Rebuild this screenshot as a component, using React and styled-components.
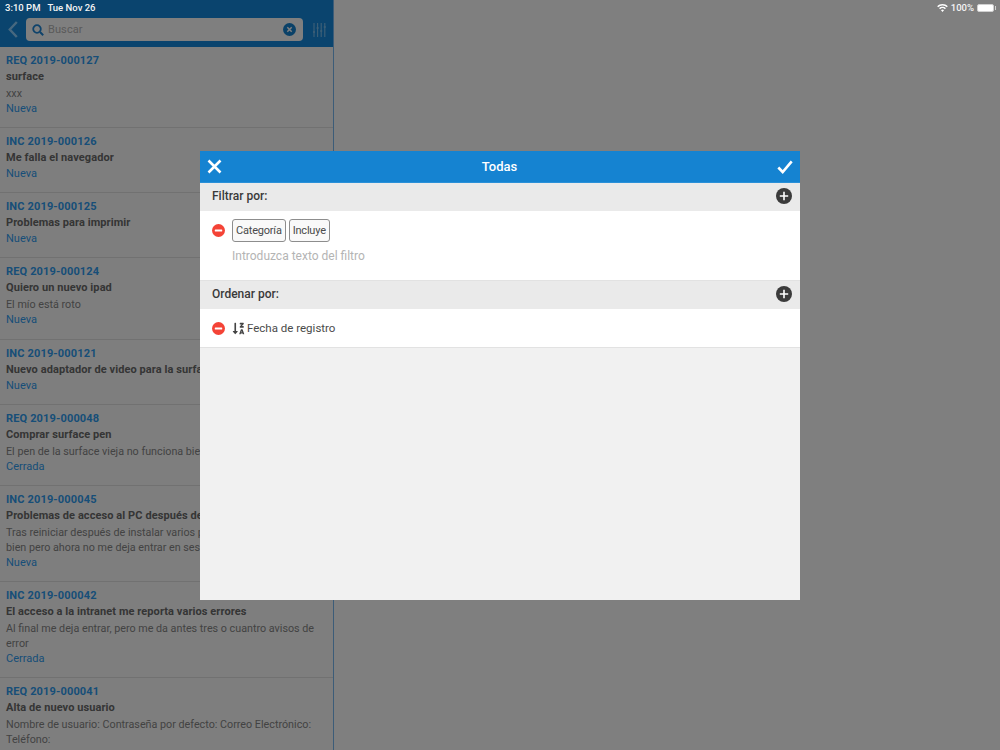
import React from 'react';
import styled, { createGlobalStyle } from 'styled-components';
import { FaSortAlphaDownAlt } from 'react-icons/fa';

const Global = createGlobalStyle`
  html, body { margin: 0; padding: 0; height: 100%; background: #fff; }
  body { font-family: Roboto, "Liberation Sans", sans-serif; overflow: hidden; }
  * { box-sizing: border-box; }
`;

const Page = styled.div`
  position: relative;
  width: 1000px;
  height: 750px;
  overflow: hidden;
  display: flex;
  background: #fff;
`;
const Sidebar = styled.aside`
  width: 334px;
  height: 750px;
  overflow: hidden;
  border-right: 1px solid #78b8f0;
  flex: none;
  display: flex;
  flex-direction: column;
`;
const NavBar = styled.header`
  height: 47px;
  flex: none;
  background: #1589dc;
  padding: 12px 0 0 8px;
  display: flex;
  align-items: center;
`;
const SearchBox = styled.div`
  width: 277px;
  height: 23px;
  margin: 0 10px 0 8px;
  background: #fff;
  border-radius: 4px;
  display: flex;
  align-items: center;
  padding: 0 7px 0 6px;
  gap: 4px;
`;
const SearchText = styled.span`
  flex: 1;
  font-size: 11px;
  color: #b4b4b4;
  letter-spacing: 0.1px;
`;
const Item = styled.article`
  padding: 6px 6px 0;
  height: ${p => p.$h}px;
  flex: none;
  border-bottom: 1px solid #e3e3e3;
  font-size: 11px;
  line-height: 16px;
  background: #fdfdfd;
  white-space: nowrap;
`;
const Code = styled.div`
  color: #2f9cf0;
  font-weight: 700;
  letter-spacing: 0.15px;
`;
const Subject = styled.div`
  color: #6a6a6a;
  font-weight: 700;
  letter-spacing: 0.08px;
`;
const BodyBlock = styled.div`
  color: #868686;
  font-size: 10.75px;
  line-height: 15px;
  padding-top: 1px;
`;
const Status = styled.div`
  color: #2f9cf0;
`;
const Scrim = styled.div`
  position: absolute;
  inset: 0;
  background: rgba(0, 0, 0, 0.5);
  display: flex;
  align-items: flex-start;
  justify-content: center;
  padding-top: 151px;
`;
const StatusBar = styled.div`
  position: absolute;
  left: 0;
  right: 0;
  top: 0;
  height: 15px;
  padding: 0 4px 0 5px;
  display: flex;
  align-items: center;
  justify-content: space-between;
  color: #f4f4f4;
  font-size: 9.5px;
  font-weight: 500;
`;
const StatusGroup = styled.div`
  display: flex;
  align-items: center;
  gap: ${p => p.$gap}px;
`;
const Battery = styled.span`
  position: relative;
  width: 17px;
  height: 8px;
  border: 1px solid #cfcfcf;
  border-radius: 2px;
  background: #fff;
  display: block;
  margin-right: 2px;
  &::after {
    content: '';
    position: absolute;
    right: -3px;
    top: 1px;
    width: 1.500px;
    height: 4px;
    background: #cfcfcf;
  }
`;
const Modal = styled.section`
  width: 600px;
  height: 449px;
  background: #f1f1f1;
  display: flex;
  flex-direction: column;
`;
const ModalHeader = styled.div`
  height: 32px;
  flex: none;
  background: #1583d1;
  padding: 0 7px;
  display: flex;
  align-items: center;
  justify-content: space-between;
  border-bottom: 1px solid #2a90d8;
`;
const ModalTitle = styled.h2`
  margin: 0;
  font-size: 13px;
  font-weight: 500;
  color: #fff;
`;
const SectionHead = styled.div`
  height: 28px;
  flex: none;
  background: #eaeaea;
  padding: 0 8px 2px 12px;
  display: flex;
  align-items: center;
  justify-content: space-between;
  font-size: 12px;
  font-weight: 500;
  color: #3a3a3a;
`;
const Rule = styled.div`
  background: #fff;
  border-bottom: 1px solid #e2e2e2;
  padding: ${p => p.$pad};
  height: ${p => p.$h}px;
  flex: none;
`;
const RuleRow = styled.div`
  display: flex;
  align-items: center;
  height: ${p => p.$h}px;
`;
const MinusIcon = styled.span`
  margin-right: 7px;
  display: flex;
`;
const Chip = styled.span`
  height: 23px;
  padding: 0 3px;
  border: 1px solid #8d8d8d;
  border-radius: 3px;
  background: #f9f9f9;
  display: inline-flex;
  align-items: center;
  font-size: 11px;
  letter-spacing: -0.2px;
  color: #4a4a4a;
  & + & { margin-left: 3px; }
`;
const Placeholder = styled.div`
  margin: 6px 0 0 20px;
  font-size: 12px;
  line-height: 16px;
  color: #b4b4b4;
`;
const SortLabel = styled.span`
  margin-left: 2px;
  font-size: 11.5px;
  color: #4a4a4a;
`;

const Minus = () => (
  <svg width="13" height="13" viewBox="0 0 13 13">
    <circle cx="6.5" cy="6.500" r="6.500" fill="#f44336" />
    <rect x="2.800" y="5.600" width="7.400" height="1.800" rx=".5" fill="#fff" />
  </svg>
);
const Plus = () => (
  <svg width="16" height="16" viewBox="0 0 16 16">
    <circle cx="8" cy="8" r="8" fill="#3b3b3b" />
    <path d="M8 3.800v8.400M3.800 8h8.400" stroke="#fff" strokeWidth="1.600" />
  </svg>
);

const items = [
  { h: 81, code: 'REQ 2019-000127', subject: 'surface', body: ['xxx'], status: 'Nueva' },
  { h: 65, code: 'INC 2019-000126', subject: 'Me falla el navegador', status: 'Nueva' },
  { h: 65, code: 'INC 2019-000125', subject: 'Problemas para imprimir', status: 'Nueva' },
  { h: 82, code: 'REQ 2019-000124', subject: 'Quiero un nuevo ipad', body: ['El mío está roto'], status: 'Nueva' },
  { h: 65, code: 'INC 2019-000121', subject: 'Nuevo adaptador de video para la surface', status: 'Nueva' },
  { h: 81, code: 'REQ 2019-000048', subject: 'Comprar surface pen', body: ['El pen de la surface vieja no funciona bien'], status: 'Cerrada' },
  { h: 96, code: 'INC 2019-000045', subject: 'Problemas de acceso al PC después de instalar', body: ['Tras reiniciar después de instalar varios programas', 'bien pero ahora no me deja entrar en sesión'], status: 'Nueva' },
  { h: 96, code: 'INC 2019-000042', subject: 'El acceso a la intranet me reporta varios errores', body: ['Al final me deja entrar, pero me da antes tres o cuantro avisos de', 'error'], status: 'Cerrada' },
  { h: 96, code: 'REQ 2019-000041', subject: 'Alta de nuevo usuario', body: ['Nombre de usuario: Contraseña por defecto: Correo Electrónico:', 'Teléfono:'] },
];

export default function App() {
  return (
    <Page>
      <Global />
      <Sidebar>
        <NavBar>
          <svg width="10" height="17" viewBox="0 0 10 17" fill="none">
            <path d="M8.800 1 1.800 8.500l7 7.500" stroke="#8fd0ff" strokeWidth="2.400" />
          </svg>
          <SearchBox>
            <svg width="12" height="12" viewBox="0 0 12 12" fill="none">
              <circle cx="5" cy="5" r="3.800" stroke="#1f86d6" strokeWidth="1.800" />
              <path d="m8 8 3.200 3.200" stroke="#1f86d6" strokeWidth="2" />
            </svg>
            <SearchText>Buscar</SearchText>
            <svg width="13" height="13" viewBox="0 0 13 13">
              <circle cx="6.500" cy="6.500" r="6.500" fill="#1583d1" />
              <path d="m4.300 4.300 4.400 4.400m0-4.400-4.400 4.400" stroke="#fff" strokeWidth="1.500" />
            </svg>
          </SearchBox>
          <svg width="13" height="14" viewBox="0 0 13 14" fill="none" stroke="#7cc0ee" strokeWidth="1.100">
            <path d="M1 0v14M4.600 0v14M8.200 0v14M11.800 0v14" />
            <path d="M0 9h2M3.600 5h2M7.200 8h2M10.800 4h2" strokeWidth="1.600" />
          </svg>
        </NavBar>
        {items.map(it => (
          <Item key={it.code} $h={it.h}>
            <Code>{it.code}</Code>
            <Subject>{it.subject}</Subject>
            {it.body && <BodyBlock>{it.body.map(l => <div key={l}>{l}</div>)}</BodyBlock>}
            {it.status && <Status>{it.status}</Status>}
          </Item>
        ))}
      </Sidebar>
      <Scrim>
        <Modal>
          <ModalHeader>
            <svg width="15" height="15" viewBox="0 0 15 15" fill="none">
              <path d="m1.500 1.500 12 12m0-12-12 12" stroke="#fff" strokeWidth="2.600" />
            </svg>
            <ModalTitle>Todas</ModalTitle>
            <svg width="16" height="14" viewBox="0 0 16 14" fill="none">
              <path d="m1.300 7.500 4.400 4.500L14.700 1.300" stroke="#fff" strokeWidth="2.600" />
            </svg>
          </ModalHeader>
          <SectionHead>
            Filtrar por:
            <Plus />
          </SectionHead>
          <Rule $h={70} $pad="7px 0 0 12px">
            <RuleRow $h={24}>
              <MinusIcon><Minus /></MinusIcon>
              <Chip>Categoría</Chip>
              <Chip>Incluye</Chip>
            </RuleRow>
            <Placeholder>Introduzca texto del filtro</Placeholder>
          </Rule>
          <SectionHead>
            Ordenar por:
            <Plus />
          </SectionHead>
          <Rule $h={39} $pad="0 0 0 12px">
            <RuleRow $h={38}>
              <MinusIcon><Minus /></MinusIcon>
              <FaSortAlphaDownAlt size={13} color="#444" />
              <SortLabel>Fecha de registro</SortLabel>
            </RuleRow>
          </Rule>
        </Modal>
      </Scrim>
      <StatusBar>
        <StatusGroup $gap={7}>
          <span>3:10 PM</span>
          <span>Tue Nov 26</span>
        </StatusGroup>
        <StatusGroup $gap={3}>
          <svg width="11" height="8" viewBox="0 0 11 8" fill="#fff">
            <path d="M5.500 0C3.400 0 1.600.8.2 2.200l1 1A6 6 0 0 1 5.500 1.500a6 6 0 0 1 4.300 1.700l1-1C9.400.8 7.600 0 5.500 0Zm0 2.800c-1.300 0-2.500.5-3.400 1.400l1 1a3.400 3.400 0 0 1 4.800 0l1-1c-.9-.9-2.100-1.400-3.400-1.400Zm0 2.800c-.6 0-1.100.2-1.500.6l1.500 1.800 1.500-1.800c-.4-.4-.9-.6-1.500-.6Z" />
          </svg>
          <span>100%</span>
          <Battery />
        </StatusGroup>
      </StatusBar>
    </Page>
  );
}
